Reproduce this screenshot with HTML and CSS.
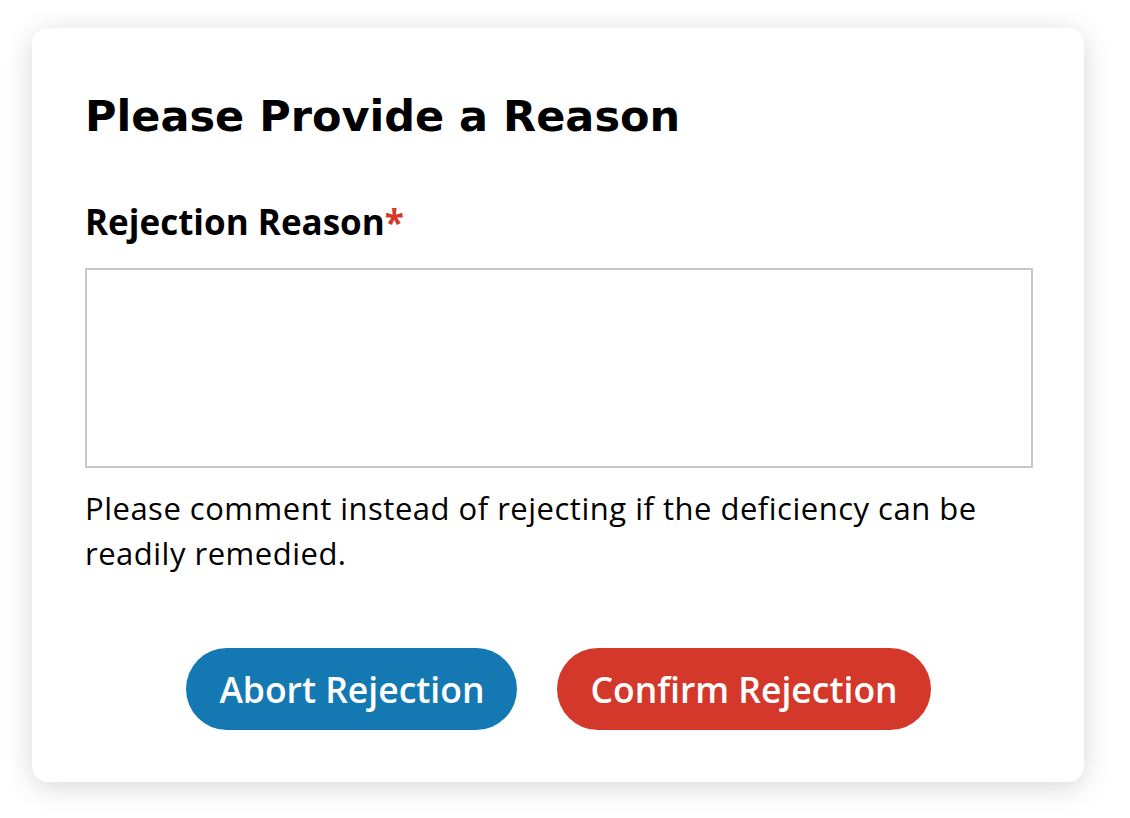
FILE: index.html
```html
<!DOCTYPE html>
<html lang="en">
<head>
<meta charset="utf-8">
<title>Please Provide a Reason</title>
<link rel="stylesheet" href="styles.css">
</head>
<body>
<div class="modal">
  <h1 class="title">Please Provide a Reason</h1>
  <label class="label" for="reason">Rejection Reason<span class="req">*</span></label>
  <textarea id="reason" class="input"></textarea>
  <p class="help">Please comment instead of rejecting if the deficiency can be readily remedied.</p>
  <div class="actions">
    <button class="btn btn-abort">Abort Rejection</button>
    <button class="btn btn-confirm">Confirm Rejection</button>
  </div>
</div>
</body>
</html>
```

FILE: styles.css
```css
html, body {
  margin: 0;
  background: #ffffff;
}
body {
  padding: 28px 0 36px 32px;
}
.modal {
  box-sizing: border-box;
  width: 1052px;
  height: 754px;
  background: #fff;
  border-radius: 16px;
  box-shadow: 0 5px 28px rgba(0, 0, 0, 0.16);
  padding: 62px 52px 0 53px;
  display: flex;
  flex-direction: column;
  font-family: "Open Sans", "Liberation Sans", sans-serif;
  color: #000;
}
.title {
  margin: 0;
  font-family: "DejaVu Sans", "Liberation Sans", sans-serif;
  font-weight: 700;
  font-size: 43px;
  line-height: 52px;
  letter-spacing: 0;
}
.label {
  margin-top: 58px;
  font-weight: 700;
  font-size: 35px;
  line-height: 44px;
}
.req {
  color: #d4382b;
}
.input {
  box-sizing: border-box;
  margin-top: 24px;
  width: 948px;
  height: 200px;
  border: 2px solid #c8c8c8;
  border-radius: 0;
  resize: none;
  padding: 8px;
  outline: none;
  background: #fff;
}
.help {
  margin: 18px 0 0;
  font-size: 31px;
  line-height: 45px;
  letter-spacing: 0.5px;
}
.actions {
  margin-top: 72px;
  display: flex;
  justify-content: center;
  gap: 40px;
}
.btn {
  border: none;
  height: 82px;
  border-radius: 41px;
  padding: 0 33px;
  color: #fff;
  font-family: "Open Sans", "Liberation Sans", sans-serif;
  font-weight: 600;
  font-size: 35.5px;
}
.btn-abort {
  background: #1479b2;
}
.btn-confirm {
  background: #d4382b;
}
```
